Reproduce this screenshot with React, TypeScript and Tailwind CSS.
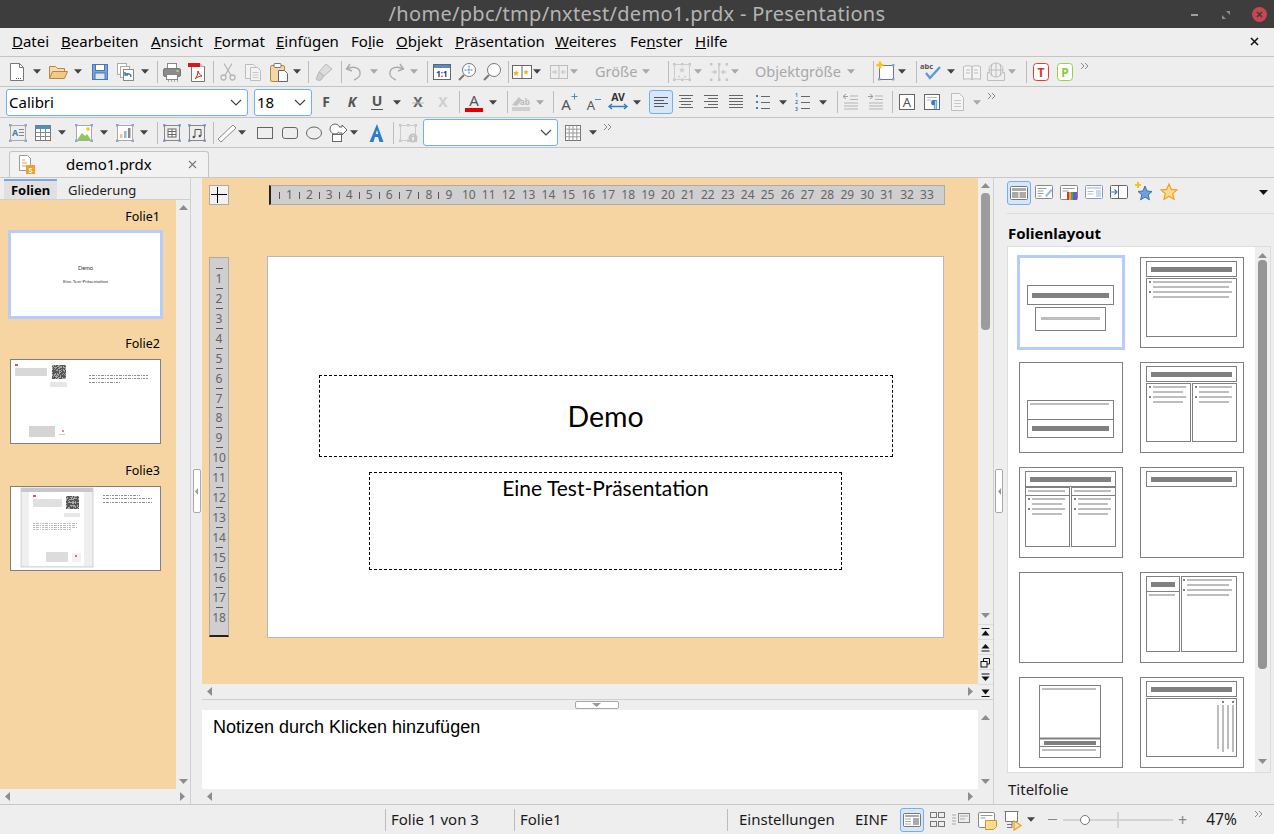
import React from "react";

type P = { c?: string; children?: React.ReactNode };
const UI = "font-['Noto_Sans',sans-serif]";

const Ic = ({ c = "", children }: P) => (
  <span className={"flex h-[22px] w-[22px] shrink-0 items-center justify-center " + c}>
    <svg width="22" height="22" viewBox="0 0 22 22" fill="none">{children}</svg>
  </span>
);
const Caret = ({ c = "", off = false }: { c?: string; off?: boolean }) => (
  <span className={"flex h-[22px] w-[8px] shrink-0 items-center justify-center " + c}>
    <svg width="9" height="5" viewBox="0 0 9 5"><path d="M0 0h9L4.5 5z" fill={off ? "#a8a8a8" : "#444"} /></svg>
  </span>
);
const Sep = ({ c = "" }: { c?: string }) => <span className={"h-[22px] w-px shrink-0 bg-[#bcbcbc] " + c} />;
const More = ({ c = "" }: { c?: string }) => (
  <span className={"mb-[10px] flex h-[10px] w-[9px] shrink-0 " + c}>
    <svg width="9" height="9" viewBox="0 0 9 9" fill="none" stroke="#8a8a8a"><path d="M1 1l3 3-3 3M5 1l3 3-3 3" /></svg>
  </span>
);
const Combo = ({ c = "", text = "" }: { c?: string; text?: string }) => (
  <div className={"flex shrink-0 items-center justify-between rounded-[3px] border border-[#6fb0f2] bg-white pl-[2px] pr-[5px] text-[15px] text-black " + c}>
    <span>{text}</span>
    <svg width="12" height="7" viewBox="0 0 12 7" fill="none" stroke="#444" strokeWidth="1.2"><path d="M1 1l5 5 5-5" /></svg>
  </div>
);

const Handles = () => (
  <g fill="#7ea6e8">
    <rect x="2" y="2" width="2.5" height="2.5" /><rect x="17.5" y="2" width="2.5" height="2.5" />
    <rect x="2" y="17.5" width="2.5" height="2.5" /><rect x="17.5" y="17.5" width="2.5" height="2.5" />
  </g>
);
const GHandles = () => (
  <g fill="#c6c6c6">
    <rect x="2" y="2" width="2.5" height="2.5" /><rect x="17.5" y="2" width="2.5" height="2.5" />
    <rect x="2" y="17.5" width="2.5" height="2.5" /><rect x="17.5" y="17.5" width="2.5" height="2.5" />
    <rect x="10" y="2" width="2.5" height="2.5" /><rect x="10" y="17.5" width="2.5" height="2.5" />
  </g>
);
const Lines = ({ xs, stroke = "#666" }: { xs: [number, number][]; stroke?: string }) => (
  <g stroke={stroke}>
    {xs.map(([a, b], i) => (
      <path key={i} d={`M${a} ${4.5 + i * 3}H${b}`} />
    ))}
  </g>
);

const Bullet = ({ x, y }: { x: number; y: number }) => <rect x={x} y={y} width="2" height="2" fill="#808080" />;
const Bar = ({ x, y, w, h = 2, dark = false }: { x: number; y: number; w: number; h?: number; dark?: boolean }) => (
  <rect x={x} y={y} width={w} height={h} fill={dark ? "#808080" : "#bdbdbd"} />
);
const Box = ({ x, y, w, h }: { x: number; y: number; w: number; h: number }) => (
  <rect x={x + 0.5} y={y + 0.5} width={w} height={h} fill="none" stroke="#808080" />
);
const TitleBox = () => (
  <>
    <Box x={6} y={4} w={90} h={15} />
    <Bar x={11} y={10} w={81} h={5} dark />
  </>
);
const Bullets = ({ x, y, w }: { x: number; y: number; w: number }) => (
  <>
    <Bullet x={x} y={y} />
    <Bar x={x + 4} y={y} w={w} />
    <Bar x={x + 4} y={y + 5} w={w - 3} />
    <Bullet x={x} y={y + 10} />
    <Bar x={x + 4} y={y + 10} w={w} />
    <Bar x={x + 4} y={y + 15} w={w - 3} />
  </>
);
const layouts: React.ReactNode[] = [
  <>
    <Box x={8} y={28} w={86} h={19} /><Bar x={13} y={36} w={77} h={5} dark />
    <Box x={16} y={50} w={70} h={23} /><Bar x={22} y={60} w={59} h={3} />
  </>,
  <><TitleBox /><Box x={6} y={21} w={90} h={58} /><Bullets x={9} y={24} w={79} /></>,
  <>
    <Box x={8} y={38} w={86} h={37} /><path d="M8 57.5h86" stroke="#808080" />
    <Bar x={11} y={41} w={79} /><Bar x={13} y={64} w={77} h={5} dark />
  </>,
  <>
    <TitleBox /><Box x={6} y={21} w={44} h={58} /><Box x={52} y={21} w={44} h={58} />
    <Bullets x={9} y={24} w={33} /><Bullets x={55} y={24} w={33} />
  </>,
  <>
    <TitleBox /><Box x={6} y={20} w={44} h={59} /><Box x={52} y={20} w={44} h={59} />
    <path d="M6 28.5h44M52 28.5h44" stroke="#808080" />
    <Bar x={9} y={23} w={37} /><Bar x={55} y={23} w={37} />
    <Bullets x={9} y={31} w={33} /><Bullets x={55} y={31} w={33} />
  </>,
  <TitleBox />,
  <></>,
  <>
    <Box x={6} y={4} w={33} h={75} /><path d="M6 19.5h33" stroke="#808080" />
    <Bar x={11} y={10} w={24} h={5} dark /><Bar x={9} y={22} w={26} />
    <Box x={41} y={4} w={55} h={75} /><Bullets x={43} y={7} w={45} />
  </>,
  <>
    <Box x={20} y={8} w={61} h={72} /><path d="M20 61.5h61" stroke="#808080" strokeWidth="2" /><path d="M20 69.5h61" stroke="#808080" />
    <Bar x={23} y={11} w={54} /><Bar x={25} y={64} w={52} h={4} dark /><Bar x={23} y={72} w={54} />
  </>,
  <>
    <TitleBox /><Box x={6} y={21} w={90} h={58} />
    <Bar x={77} y={28} w={2} h={44} /><Bar x={82} y={28} w={2} h={47} /><Bar x={87} y={28} w={2} h={44} /><Bar x={92} y={28} w={2} h={47} />
    <Bullet x={82} y={24} /><Bullet x={92} y={24} />
  </>,
];

const Layout = ({ i }: { i: number }) => (
  <svg width="104" height="91" viewBox="0 0 104 91" className="block">
    <rect x="0.5" y="0.5" width="103" height="90" fill="#fff" stroke="#808080" />
    {layouts[i]}
  </svg>
);

const Qr = ({ x, y, s }: { x: number; y: number; s: number }) => {
  const r: React.ReactNode[] = [];
  let seed = 23;
  for (let a = 0; a < s; a++)
    for (let b = 0; b < s; b++) {
      seed = (seed * 137 + 71) % 2039;
      if (seed % 5 < 3) r.push(<rect key={a + "-" + b} x={x + a} y={y + b} width="1" height="1" fill="#555" />);
    }
  return <g><rect x={x} y={y} width={s} height={s} fill="#a8a8a8" />{r}</g>;
};
const Noise = ({ x, y, w, c = "#8f8f8f" }: { x: number; y: number; w: number; c?: string }) => (
  <path d={`M${x} ${y + 0.5}h${w}`} stroke={c} strokeDasharray="2 1 3 1 1 1" />
);

const Thumb2 = () => (
  <svg width="151" height="85" viewBox="0 0 151 85" className="block">
    <rect x="0.5" y="0.5" width="150" height="84" fill="#fff" stroke="#808080" />
    <rect x="5" y="5" width="3" height="2" fill="#e25555" />
    <rect x="5" y="9" width="32" height="8" fill="#d8d8d8" />
    <Qr x={42} y={6} s={14} />
    <rect x="40" y="23" width="17" height="5" fill="#e6e6e6" />
    <rect x="19" y="67" width="26" height="11" fill="#d4d4d4" />
    <rect x="52" y="71" width="2" height="2" fill="#e88" />
    <rect x="49" y="75" width="6" height="1" fill="#ccc" />
    <Noise x={79} y={16} w={59} /><Noise x={79} y={19} w={59} /><Noise x={79} y={23} w={31} />
  </svg>
);
const Thumb3 = () => (
  <svg width="151" height="85" viewBox="0 0 151 85" className="block">
    <rect x="0.5" y="0.5" width="150" height="84" fill="#fff" stroke="#808080" />
    <rect x="11" y="2" width="72" height="79" fill="#efefef" stroke="#aaa" strokeWidth="0.5" />
    <rect x="11" y="2" width="72" height="4" fill="#c8c8c8" />
    <rect x="19" y="6" width="55" height="74" fill="#fff" />
    <rect x="23" y="9" width="3" height="2" fill="#e25555" />
    <rect x="23" y="13" width="29" height="8" fill="#e0e0e0" />
    <Qr x={56} y={10} s={13} />
    <rect x="54" y="27" width="16" height="4" fill="#e8e8e8" />
    <Noise x={23} y={37} w={44} c="#bbb" /><Noise x={23} y={39} w={42} c="#bbb" /><Noise x={23} y={41} w={44} c="#bbb" /><Noise x={23} y={43} w={38} c="#bbb" />
    <rect x="36" y="66" width="22" height="10" fill="#dcdcdc" />
    <rect x="62" y="67" width="9" height="9" fill="#f2f2f2" />
    <rect x="65" y="69" width="2" height="2" fill="#e66" />
    <Noise x={93} y={9} w={37} /><Noise x={93} y={12} w={49} /><Noise x={93} y={16} w={49} />
  </svg>
);

const Tri = ({ d = "d" }: { d?: "u" | "d" | "l" | "r" }) => {
  const w = d === "u" || d === "d";
  const p = { u: "M0 5h9L4.5 0z", d: "M0 0h9L4.5 5z", l: "M5 0v9L0 4.5z", r: "M0 0v9L5 4.5z" }[d];
  return (
    <svg width={w ? 9 : 5} height={w ? 5 : 9} viewBox={w ? "0 0 9 5" : "0 0 5 9"} className="block">
      <path d={p} fill="#8d8d8d" />
    </svg>
  );
};

const NavBtn = ({ children, c = "" }: P) => (
  <div className={"flex h-[15px] w-[15px] items-center justify-center border-t border-[#dcdcdc] " + c}>
    <svg width="11" height="11" viewBox="0 0 11 11" fill="none">{children}</svg>
  </div>
);
const Handle = () => (
  <div className="flex h-[44px] w-[8px] items-center justify-center rounded-[2px] border border-[#a8a8a8] bg-white">
    <svg width="3" height="7" viewBox="0 0 3 7"><path d="M3 0v7L0 3.5z" fill="#999" /></svg>
  </div>
);

export default function App() {
  return (
    <div className={"flex h-[834px] w-[1274px] flex-col overflow-hidden bg-[#eeeeee] text-[14px] text-[#1a1a1a] " + UI}>
      {/* title bar */}
      <div className="relative flex h-[28px] shrink-0 items-center justify-center bg-[#3d3d3d] text-[20px] tracking-[0.3px] text-[#b4b4b4]">
        /home/pbc/tmp/nxtest/demo1.prdx - Presentations
        <div className="absolute right-[7px] top-[7px] flex items-center">
          <span className="mr-[24px] h-[2px] w-[7px] bg-[#a0a0a0]" />
          <svg width="8" height="8" viewBox="0 0 8 8" className="mr-[22px]"><path d="M4 0h4v4zM0 4l4 4H0z" fill="#8d8d8d" /></svg>
          <span className="flex h-[15px] w-[15px] items-center justify-center rounded-full bg-[#c9464f]">
            <svg width="7" height="7" viewBox="0 0 7 7" stroke="#3d3d3d" strokeWidth="1.6"><path d="M1 1l5 5M6 1L1 6" /></svg>
          </span>
        </div>
      </div>
      {/* menu */}
      <div className="flex h-[29px] shrink-0 items-center border-b border-[#c4c4c4] pb-[2px] pl-[12px] text-[15px] text-black">
        <span className="w-[49px]"><u>D</u>atei</span>
        <span className="w-[90px]"><u>B</u>earbeiten</span>
        <span className="w-[63px]"><u>A</u>nsicht</span>
        <span className="w-[62px]"><u>F</u>ormat</span>
        <span className="w-[75px]"><u>E</u>infügen</span>
        <span className="w-[45px]">Fo<u>l</u>ie</span>
        <span className="w-[59px]"><u>O</u>bjekt</span>
        <span className="w-[100px]"><u>P</u>räsentation</span>
        <span className="w-[75px]"><u>W</u>eiteres</span>
        <span className="w-[65px]">Fe<u>n</u>ster</span>
        <span><u>H</u>ilfe</span>
        <svg width="9" height="9" viewBox="0 0 9 9" stroke="#111" strokeWidth="1.5" className="ml-auto mr-[15px]"><path d="M1 1l7 7M8 1L1 8" /></svg>
      </div>
      {/* toolbar 1 */}
      <div className="flex h-[30px] shrink-0 items-center border-b border-[#c4c4c4]">
        <Ic c="ml-[6px]"><path d="M4.5 2.5h9l4 4v13h-13z" fill="#fff" stroke="#777" /><path d="M13.5 2.5v4h4" stroke="#777" /><path d="M10 17.5h1M12 17.5h1M14 17.5h1" stroke="#555" /></Ic>
        <Caret c="ml-[5px]" />
        <Ic c="ml-[6px]"><path d="M2.5 17.5v-12h6l2 2h7v3" fill="#f4dcb0" stroke="#b9853f" /><path d="M2.5 17.5l3-7h15l-3 7z" fill="#f2c985" stroke="#b9853f" /></Ic>
        <Caret c="ml-[5px]" />
        <Ic c="ml-[7px]"><rect x="3.5" y="3.5" width="15" height="15" fill="#7aa5dc" stroke="#4a78b0" /><rect x="6.5" y="3.5" width="9" height="6" fill="#fff" stroke="#4a78b0" /><rect x="6" y="12" width="10" height="6.5" fill="#dfe9f7" stroke="#4a78b0" /></Ic>
        <Ic c="ml-[4px]"><rect x="2.5" y="2.5" width="9" height="11" fill="#fff" stroke="#aaa" /><rect x="5.5" y="5.5" width="9" height="11" fill="#fff" stroke="#aaa" /><rect x="8.5" y="8.5" width="10" height="11" fill="#fff" stroke="#888" /><path d="M16 16c0-3-3-4-6-2.5M10 11v3h3" stroke="#3f7fb5" strokeWidth="1.5" /></Ic>
        <Caret c="ml-[4px]" />
        <Sep c="ml-[8px]" />
        <Ic c="ml-[3px]"><rect x="6.5" y="2.5" width="9" height="5" fill="#fff" stroke="#888" /><rect x="2.5" y="7.5" width="17" height="8" rx="1.5" fill="#8b8b8b" stroke="#777" /><rect x="5.5" y="13.5" width="11" height="5" fill="#fff" stroke="#888" /><path d="M7 20h1M10 20h1M13 20h1M16 20h1" stroke="#666" /><rect x="15.5" y="9" width="2" height="2" fill="#b7d85c" /></Ic>
        <Ic c="ml-[3px]"><path d="M5.5 5.5h13v15h-13z" fill="#fff" stroke="#777" /><rect x="2" y="2" width="12" height="4" fill="#d11a1a" /><path d="M14 2l4 4h-4z" fill="#bbb" /><path d="M9 18c2-2 3-5 3-8 1 3 2 4 4 5-2 0-5 1-7 3z" fill="none" stroke="#d11a1a" /></Ic>
        <Sep c="ml-[5px]" />
        <Ic c="ml-[3px]"><g stroke="#b5b5b5" strokeWidth="1.3"><circle cx="6.5" cy="16.5" r="2.5" /><circle cx="15.5" cy="16.5" r="2.5" /><path d="M8 14.5L15 2.5M14 14.5L7 2.5" /></g></Ic>
        <Ic c="ml-[3px]"><g stroke="#bdbdbd" fill="#f3f3f3"><path d="M3.5 3.5h8l2 2v12h-10z" /><path d="M8.5 6.5h7l3 3v10h-10z" /></g><path d="M10.5 11.5h6M10.5 14h6M10.5 16.5h6" stroke="#c8c8c8" /></Ic>
        <Ic c="ml-[4px]"><rect x="2.5" y="4.5" width="14" height="16" rx="1.5" fill="#f2d7a8" stroke="#b9853f" /><rect x="6" y="2.5" width="7" height="4" rx="1" fill="#fff" stroke="#777" /><path d="M10.5 9.5h6l3 3v8h-9z" fill="#fff" stroke="#666" /></Ic>
        <Caret c="ml-[3px]" />
        <Sep c="ml-[7px]" />
        <Ic c="ml-[4px]"><path d="M13 3l6 5-8 7-5-4z" fill="#ddd" stroke="#b8b8b8" /><path d="M6 11l5 4-3 4c-2 1-4 0-5-1z" fill="#cfcfcf" stroke="#b8b8b8" /></Ic>
        <Sep c="ml-[6px]" />
        <Ic c="ml-px"><path d="M7 3L3.5 8 9 10M4 8c5-3 12-2 13 3 1 4-3 7-6 8" stroke="#ababab" strokeWidth="1.4" /></Ic>
        <Caret c="ml-[5px]" off />
        <Ic c="ml-[7px]"><path d="M15 3l3.5 5-5.5 2M18 8c-5-3-12-2-13 3-1 4 3 7 6 8" stroke="#ababab" strokeWidth="1.4" /></Ic>
        <Caret c="ml-[3px]" off />
        <Sep c="ml-[9px]" />
        <Ic c="ml-[3px]"><rect x="2.5" y="3.5" width="17" height="15" fill="#fff" stroke="#666" /><rect x="3" y="4" width="16" height="3" fill="#4f8fc4" /><text x="11" y="16" textAnchor="middle" fontSize="8" fontWeight="700" fill="#336" fontFamily="Noto Sans">1:1</text></Ic>
        <Ic c="ml-[3px]"><circle cx="13" cy="9" r="6.5" fill="#fff" stroke="#777" /><path d="M8 14l-5 5" stroke="#777" strokeWidth="2" /><path d="M13 4.5v9M8.5 9h9" stroke="#3f7fb5" strokeDasharray="2 1" /></Ic>
        <Ic c="ml-[3px]"><circle cx="13" cy="9" r="6.5" fill="#fff" stroke="#777" /><path d="M8 14l-5 5" stroke="#777" strokeWidth="2" /></Ic>
        <Sep c="ml-[5px]" />
        <Ic c="ml-[2px]"><rect x="1.5" y="4.5" width="19" height="13" fill="#fff" stroke="#666" /><path d="M11 4.5v13" stroke="#666" /><path d="M5 9l1 2h2l-1.500 1.500L7 15l-2-1.200L3 15l.5-2.500L2.500 11h2z" fill="#f0b323" /><path d="M15 8l.7 2 2 .5-1.500 1.200.5 2-1.700-1.200-1.700 1.200.5-2-1.300-1.200 2-.5z" fill="#f0b323" /></Ic>
        <Caret />
        <Ic c="ml-[7px]"><g stroke="#bdbdbd"><rect x="2.500" y="4.500" width="17" height="13" /><path d="M11 4.500v13M4 11h4M6.500 9l2 2-2 2M18 11h-4M15.500 9l-2 2 2 2" /></g></Ic>
        <Caret off />
        <span className="ml-[17px] w-[42px] shrink-0 text-[14.500px] text-[#a8a8a8]">Größe</span>
        <Caret c="ml-[5px]" off />
        <Sep c="ml-[18px]" />
        <Ic c="ml-[2px]"><GHandles /><rect x="3.500" y="3.500" width="15" height="15" stroke="#ccc" /><path d="M11 6l1 2h2l-1.500 1.500.5 2-2-1-2 1 .5-2L8 8h2zM8 14l.5 1 1 .3-.8.7.2 1-.9-.5-.9.5.2-1-.8-.7 1-.3zM14 14l.5 1 1 .3-.8.7.2 1-.9-.5-.9.5.2-1-.8-.7 1-.3z" fill="#d0d0d0" /></Ic>
        <Caret c="ml-px" off />
        <Ic c="ml-[6px]"><GHandles /><path d="M11 4v14M3.500 11h5M6 9l2.500 2L6 13M18.500 11h-5M16 9l-2.500 2 2.500 2" stroke="#bdbdbd" /></Ic>
        <Caret c="ml-px" off />
        <span className="ml-[16px] w-[88px] shrink-0 text-[14.500px] text-[#a8a8a8]">Objektgröße</span>
        <Caret c="ml-[4px]" off />
        <Sep c="ml-[18px]" />
        <Ic c="ml-[2px]"><rect x="3.500" y="4.500" width="14" height="14" fill="#fff" stroke="#777" /><rect x="16" y="3" width="2.500" height="2.500" fill="#7ea6e8" /><rect x="2" y="17" width="2.500" height="2.500" fill="#7ea6e8" /><rect x="16" y="17" width="2.500" height="2.500" fill="#7ea6e8" /><path d="M4 0.500v7M0.500 4h7" stroke="#f5c518" strokeWidth="2.400" /></Ic>
        <Caret />
        <Sep c="ml-[10px]" />
        <Ic c="ml-[3px]"><text x="0" y="8" fontSize="7.500" fontWeight="700" fill="#555" fontFamily="Noto Sans">abc</text><path d="M6 12l4 5 10-11" stroke="#5b9bd5" strokeWidth="2.400" /></Ic>
        <Caret c="ml-[5px]" />
        <Ic c="ml-[6px]"><g stroke="#bdbdbd" fill="#f4f4f4"><path d="M2.500 5.500c3-1 6-1 8.500 0v13c-2.500-1-5.500-1-8.500 0zM19.500 5.500c-3-1-6-1-8.500 0v13c2.500-1 5.500-1 8.500 0z" /><path d="M5 9h4M5 12h4M13 9h4M13 12h4" /></g></Ic>
        <Ic c="ml-[2px]"><g stroke="#bdbdbd" fill="#efefef"><path d="M2.500 11.500h17v8h-17z" /><circle cx="11" cy="9" r="7" /><path d="M4 9h14M11 2v14M7 3c-1 4-1 8 0 12M15 3c1 4 1 8 0 12" fill="none" /></g></Ic>
        <Caret c="ml-px" off />
        <Sep c="ml-[10px]" />
        <Ic c="ml-[3px]"><rect x="3.500" y="2.500" width="15" height="17" rx="3" fill="#fff" stroke="#e23b3b" /><text x="11" y="15.500" textAnchor="middle" fontSize="12" fontWeight="700" fill="#e12b2b" fontFamily="Noto Sans">T</text></Ic>
        <Ic c="ml-[2px]"><rect x="3.500" y="2.500" width="15" height="17" rx="3" fill="#fff" stroke="#9bd13f" /><text x="11" y="15.500" textAnchor="middle" fontSize="12" fontWeight="700" fill="#8cc63f" fontFamily="Noto Sans">P</text></Ic>
        <More c="ml-[4px]" />
      </div>
      {/* toolbar 2 */}
      <div className="flex h-[31px] shrink-0 items-center border-b border-[#c4c4c4]">
        <Combo c="ml-[6px] h-[27px] w-[242px]" text="Calibri" />
        <Combo c="ml-[6px] h-[27px] w-[58px]" text="18" />
        <Ic c="ml-[3px]"><text x="11" y="16" textAnchor="middle" fontSize="14" fontWeight="700" fill="#555" fontFamily="Noto Sans">F</text></Ic>
        <Ic c="ml-[4px]"><text x="11" y="16" textAnchor="middle" fontSize="14" fontWeight="700" fontStyle="italic" fill="#555" fontFamily="Noto Sans">K</text></Ic>
        <Ic c="ml-[3px]"><text x="11" y="15" textAnchor="middle" fontSize="14" fontWeight="700" fill="#555" fontFamily="Noto Sans">U</text><path d="M5 18.500h12" stroke="#555" /></Ic>
        <Caret c="ml-[5px]" />
        <Ic c="ml-[6px]"><text x="11" y="16" textAnchor="middle" fontSize="14" fontWeight="700" fill="#666" fontFamily="Noto Sans">X</text><path d="M5 12h12" stroke="#bbb" /></Ic>
        <Ic c="ml-[3px]"><text x="11" y="16" textAnchor="middle" fontSize="14" fontWeight="700" fill="#cfcfcf" fontFamily="Noto Sans">X</text></Ic>
        <Sep c="ml-[5px]" />
        <Ic c="ml-[3px]"><text x="11" y="15" textAnchor="middle" fontSize="15" fill="#555" fontFamily="Noto Sans">A</text><rect x="2" y="17" width="18" height="4" fill="#e00000" /></Ic>
        <Caret c="ml-[4px]" />
        <Sep c="ml-[10px]" />
        <Ic c="ml-[2px]"><path d="M2 14l7-8 3 3-5 6z" fill="#c4c4c4" /><text x="10" y="14" fontSize="8" fontWeight="700" fill="#bcbcbc" fontFamily="Noto Sans">ab</text><rect x="2" y="16" width="18" height="4" fill="#cfcfcf" /></Ic>
        <Caret c="ml-[4px]" off />
        <Sep c="ml-[9px]" />
        <Ic c="ml-[3px]"><text x="9" y="19" textAnchor="middle" fontSize="15" fill="#555" fontFamily="Noto Sans">A</text><path d="M14.500 5.500h6M17.500 2.500v6" stroke="#3f8fc9" /></Ic>
        <Ic c="ml-[3px]"><text x="9" y="19" textAnchor="middle" fontSize="13" fill="#555" fontFamily="Noto Sans">A</text><path d="M13 8.500h6" stroke="#3f8fc9" /></Ic>
        <Ic c="ml-[3px]"><text x="11" y="10" textAnchor="middle" fontSize="10.500" fontWeight="700" fill="#333" fontFamily="Noto Sans">AV</text><path d="M2 15.500h18M5 13l-3 2.500L5 18M17 13l3 2.500-3 2.500" stroke="#2f7fc4" strokeWidth="1.400" /></Ic>
        <Caret c="ml-[4px]" />
        <span className="ml-[8px] flex h-[24px] w-[24px] shrink-0 items-center justify-center rounded-[3px] border border-[#6fb0f2] bg-[#d9e6f8]">
          <svg width="16" height="13" viewBox="0 0 16 13" stroke="#555"><path d="M1 1.500h14M1 4.500h10M1 7.500h14M1 10.500h10" /></svg>
        </span>
        <Ic c="ml-[2px]"><Lines xs={[[4, 18], [6, 16], [4, 18], [6, 16], [4, 18]]} /></Ic>
        <Ic c="ml-[3px]"><Lines xs={[[4, 18], [8, 18], [4, 18], [8, 18], [4, 18]]} /></Ic>
        <Ic c="ml-[3px]"><Lines xs={[[4, 18], [4, 18], [4, 18], [4, 18], [4, 18]]} /></Ic>
        <Ic c="ml-[5px]"><rect x="4" y="4" width="2" height="2" fill="#3f7fb5" /><rect x="4" y="10" width="2" height="2" fill="#3f7fb5" /><rect x="4" y="16" width="2" height="2" fill="#3f7fb5" /><path d="M9 5.500h9M9 11.500h9M9 17.500h9" stroke="#666" /></Ic>
        <Caret c="ml-[5px]" />
        <Ic c="ml-[5px]"><g fontSize="5" fontWeight="700" fill="#3f7fb5" fontFamily="Noto Sans"><text x="3" y="6">1</text><text x="3" y="13">2</text><text x="3" y="20">3</text></g><path d="M9 5.500h9M9 11.500h9M9 17.500h9" stroke="#666" /></Ic>
        <Caret c="ml-[5px]" />
        <Sep c="ml-[10px]" />
        <Ic c="ml-[2px]"><path d="M10 5h8M10 8.500h8M4 12h14M4 15h14M4 18h14" stroke="#b5b5b5" /><path d="M3 5.500h5M6 3L3 5.500 6 8" stroke="#9d9d9d" /></Ic>
        <Ic c="ml-[3px]"><path d="M10 5h8M10 8.500h8M4 12h14M4 15h14M4 18h14" stroke="#b5b5b5" /><path d="M3 5.500h5M5 3l3 2.500L5 8" stroke="#9d9d9d" /></Ic>
        <Sep c="ml-[5px]" />
        <Ic c="ml-[3px]"><rect x="3.500" y="3.500" width="15" height="15" fill="#fff" stroke="#666" /><text x="11" y="16" textAnchor="middle" fontSize="13" fill="#555" fontFamily="Noto Sans">A</text></Ic>
        <Ic c="ml-[3px]"><rect x="3.500" y="3.500" width="15" height="15" fill="#fff" stroke="#666" /><path d="M6 6.500h10M6 9h4" stroke="#bbb" /><text x="13" y="17" textAnchor="middle" fontSize="11" fontWeight="700" fill="#2f7fc4" fontFamily="Noto Sans">¶</text></Ic>
        <Ic c="ml-[3px]"><path d="M5.500 2.500h8l4 4v13h-12z" fill="#f4f4f4" stroke="#bdbdbd" /><path d="M8 9.500h7M8 12.500h7M8 15.500h7" stroke="#c8c8c8" /></Ic>
        <Caret c="ml-[5px]" off />
        <More c="ml-[6px]" />
      </div>
      {/* toolbar 3 */}
      <div className="flex h-[30px] shrink-0 items-center border-b border-[#c4c4c4]">
        <Ic c="ml-[7px]"><Handles /><rect x="3.500" y="3.500" width="15" height="15" stroke="#aaa" /><text x="8" y="14" textAnchor="middle" fontSize="9" fontWeight="700" fill="#3f7fb5" fontFamily="Noto Sans">A</text><path d="M12 7.500h5M12 10.500h5M12 13.500h5" stroke="#888" /></Ic>
        <Ic c="ml-[3px]"><rect x="3.500" y="3.500" width="15" height="15" fill="#fff" stroke="#777" /><rect x="3.500" y="3.500" width="15" height="3.500" fill="#4f8fc4" /><path d="M3.500 10.500h15M3.500 14.500h15M8.500 7v11M13.500 7v11" stroke="#888" /></Ic>
        <Caret c="ml-[4px]" />
        <Ic c="ml-[7px]"><Handles /><rect x="3.500" y="3.500" width="15" height="15" fill="#fff" stroke="#aaa" /><path d="M4 18l5-7 3 3 2-2 4 6z" fill="#8fc85a" /><circle cx="15" cy="7" r="1.800" fill="#f5c518" /></Ic>
        <Caret c="ml-[5px]" />
        <Ic c="ml-[6px]"><Handles /><rect x="3.500" y="3.500" width="15" height="15" fill="#fff" stroke="#aaa" /><rect x="6" y="12" width="2.500" height="4" fill="#f0c878" /><rect x="10" y="9" width="2.500" height="7" fill="#8fb6dc" /><rect x="14" y="6" width="2.500" height="10" fill="#888" /></Ic>
        <Caret c="ml-[4px]" />
        <Sep c="ml-[9px]" />
        <Ic c="ml-[3px]"><Handles /><rect x="3.500" y="3.500" width="15" height="15" stroke="#888" /><rect x="7" y="7" width="8" height="8" fill="#fff" stroke="#666" /><path d="M11 7v8M7 9.500h8M7 12.500h8" stroke="#666" /></Ic>
        <Ic c="ml-[3px]"><Handles /><rect x="3.500" y="3.500" width="15" height="15" stroke="#888" /><path d="M9 15V7.500h6V14" stroke="#555" /><circle cx="7.800" cy="15" r="1.300" fill="#555" /><circle cx="13.800" cy="14" r="1.300" fill="#555" /></Ic>
        <Sep c="ml-[5px]" />
        <Ic c="ml-[2px]"><path d="M2 17l15-14 3 3L5 20z" fill="#fff" stroke="#888" /></Ic>
        <Caret />
        <Ic c="ml-[8px]"><rect x="3.500" y="5.500" width="15" height="11" stroke="#666" /></Ic>
        <Ic c="ml-[3px]"><rect x="3.500" y="5.500" width="15" height="11" rx="2.500" stroke="#666" /></Ic>
        <Ic c="ml-[2px]"><ellipse cx="11" cy="11" rx="7.500" ry="6" stroke="#666" /></Ic>
        <Ic c="ml-[2px]"><circle cx="8" cy="7" r="5" fill="#fff" stroke="#666" /><rect x="5.500" y="12.500" width="9" height="7" fill="#fff" stroke="#666" /><path d="M12 5h3V3l5 5-5 5v-2h-3" fill="#fff" stroke="#666" /></Ic>
        <Caret c="ml-px" />
        <Ic c="ml-[8px]"><path d="M11 2l6.500 18h-4L12 15h-3l-1.500 5h-4z" fill="#2f7fc4" /><path d="M9.800 12h2.400L11 8z" fill="#eee" /></Ic>
        <Sep c="ml-[5px]" />
        <Ic c="ml-[3px]"><GHandles /><rect x="3.500" y="3.500" width="15" height="15" stroke="#ccc" /><circle cx="16" cy="16" r="4.500" fill="#c4c4c4" /><path d="M16 15v3.500M16 13.500v.5" stroke="#fff" strokeWidth="1.400" /></Ic>
        <Combo c="ml-[4px] h-[27px] w-[135px]" />
        <Ic c="ml-[4px]"><rect x="3.500" y="3.500" width="15" height="15" fill="#fff" stroke="#777" /><path d="M7.200 3.500v15M11 3.500v15M14.800 3.500v15M3.500 7.200h15M3.500 11h15M3.500 14.800h15" stroke="#999" /></Ic>
        <Caret c="ml-[5px]" />
        <More c="ml-[6px]" />
      </div>
      {/* tab bar */}
      <div className="flex h-[30px] shrink-0 items-end border-b border-[#c8c8c8] pl-[9px]">
        <div className="flex h-[26px] w-[200px] items-center rounded-t-[3px] border border-b-0 border-[#c4c4c4] bg-[#f2f2f2] pl-[6px] text-[15px] text-black">
          <svg width="22" height="22" viewBox="0 0 22 22" fill="none" className="shrink-0"><path d="M3.500 1.500h8l3 3v12h-11z" fill="#fff" stroke="#999" /><path d="M6 6h3M6 9h5M6 12h5" stroke="#e8a33d" /><rect x="10" y="11" width="9" height="9" fill="#f0a030" /><text x="14.500" y="18.500" textAnchor="middle" fontSize="7.500" fontWeight="700" fill="#fff" fontFamily="Noto Sans">S</text></svg>
          <span className="ml-[28px]">demo1.prdx</span>
          <svg width="9" height="9" viewBox="0 0 9 9" stroke="#777" strokeWidth="1.100" className="ml-auto mr-[11px]"><path d="M1 1l7 7M8 1L1 8" /></svg>
        </div>
      </div>
      {/* main */}
      <div className="flex min-h-0 flex-1">
        {/* slide pane */}
        <div className="flex w-[191px] shrink-0 flex-col border-r border-[#cfcfcf]">
          <div className="flex h-[22px] shrink-0 items-end border-b border-[#cfcfcf] pl-[4px] text-[13px]">
            <div className="flex h-[20px] w-[53px] items-center justify-center border-t-2 border-[#7ba7e8] bg-[#e0e0e0] pt-[2px] font-bold text-black">Folien</div>
            <div className="mb-[-1px] ml-[11px] text-[#222]">Gliederung</div>
          </div>
          <div className="flex min-h-0 flex-1">
            <div className="flex w-[176px] flex-col bg-[#f6d5a3] pr-[16px] text-[12.500px] text-black">
              <div className="mt-[8px] text-right leading-[18px]">Folie1</div>
              <div className="ml-[8px] mt-[4px] flex h-[89px] w-[155px] flex-col items-center border-[3px] border-[#b5cdfb] bg-white font-['Lato',sans-serif]">
                <div className="mt-[30px] text-[5.600px] leading-[9px] text-[#333]">Demo</div>
                <div className="mt-[6px] text-[4.600px] leading-[7px] text-[#333]">Eine Test-Präsentation</div>
              </div>
              <div className="mt-[16px] text-right leading-[18px]">Folie2</div>
              <div className="ml-[10px] mt-[6px] w-[151px]"><Thumb2 /></div>
              <div className="mt-[18px] text-right leading-[18px]">Folie3</div>
              <div className="ml-[10px] mt-[6px] w-[151px]"><Thumb3 /></div>
            </div>
            <div className="flex w-[14px] flex-col items-center justify-between py-[5px]"><Tri d="u" /><Tri d="d" /></div>
          </div>
          <div className="flex h-[15px] shrink-0 items-center justify-between px-[5px]"><Tri d="l" /><Tri d="r" /></div>
        </div>
        {/* left gutter */}
        <div className="flex w-[11px] shrink-0 items-center justify-center"><Handle /></div>
        {/* centre */}
        <div className="flex w-[791px] shrink-0 flex-col">
          <div className="flex h-[521px] shrink-0">
            <div className="flex w-[776px] flex-col">
              <div className="h-[506px] bg-[#f6d5a3] pl-[7px] pt-[7px]">
                <div className="flex">
                  <div className="relative h-[20px] w-[20px] border border-[#aaa] bg-[#f2f2f2]">
                    <span className="absolute left-[7px] top-px h-[16px] w-px bg-black" />
                    <span className="absolute left-px top-[8px] h-px w-[16px] bg-black" />
                  </div>
                  <div className="ml-[40px] flex h-[20px] w-[676px] items-center border border-l-2 border-[#aaa] border-l-[#222] bg-[#cfcfcf] pl-[8px] text-[12px] text-[#666]">
                    {Array.from({ length: 33 }, (_, i) => (
                      <div key={i} className="flex h-full w-[19.93px] shrink-0 items-center">
                        <span className={i < 9 ? "h-[7px] w-px shrink-0 bg-[#555]" : "h-[7px] w-px shrink-0"} />
                        <span className="w-[19px] text-center">{i + 1}</span>
                      </div>
                    ))}
                  </div>
                </div>
                <div className="mt-[51px] flex items-start">
                  <div className="mt-px flex h-[380px] w-[20px] flex-col border border-b-2 border-[#aaa] border-b-[#222] bg-[#cfcfcf] pt-[10px] text-[12px] leading-none text-[#666]">
                    {Array.from({ length: 18 }, (_, i) => (
                      <div key={i} className="flex h-[19.93px] shrink-0 flex-col items-center">
                        <span className="h-px w-[7px] shrink-0 bg-[#555]" />
                        <span className="mt-[4px]">{i + 1}</span>
                      </div>
                    ))}
                  </div>
                  <div className="ml-[38px] flex h-[382px] w-[677px] flex-col items-center border border-[#b8b8b8] bg-white pt-[118px] font-['Lato',sans-serif] text-black">
                    <div className="flex h-[82px] w-[574px] items-center justify-center border border-dashed border-black text-[28.500px]">Demo</div>
                    <div className="mt-[15px] h-[98px] w-[473px] border border-dashed border-black text-center text-[21px] leading-[30px]">Eine Test-Präsentation</div>
                  </div>
                </div>
              </div>
              <div className="flex h-[15px] items-center justify-between px-[5px]"><Tri d="l" /><Tri d="r" /></div>
            </div>
            <div className="flex w-[15px] flex-col items-center">
              <div className="mt-[5px]"><Tri d="u" /></div>
              <div className="mt-[5px] h-[138px] w-[9px] rounded-[4px] bg-[#9c9c9c]" />
              <div className="mt-[283px]"><Tri d="d" /></div>
              <div className="mt-[6px] flex flex-col">
                <NavBtn><path d="M1.500 1.500h8" stroke="#111" /><path d="M1.500 8.500L5.500 3.500l4 5z" fill="#111" /></NavBtn>
                <NavBtn><path d="M1.500 6.500L5.500 2l4 4.500z" fill="#111" /><path d="M1.500 9h8" stroke="#111" /></NavBtn>
                <NavBtn><rect x="1" y="4.500" width="6" height="5.500" stroke="#111" /><path d="M3.500 4.500V1.500h6v5.500H7" stroke="#111" /></NavBtn>
                <NavBtn><path d="M1.500 2h8" stroke="#111" /><path d="M1.500 4.500L5.500 9l4-4.500z" fill="#111" /></NavBtn>
                <NavBtn><path d="M1.500 2.500l4 5 4-5z" fill="#111" /><path d="M1.500 9.500h8" stroke="#111" /></NavBtn>
              </div>
            </div>
          </div>
          <div className="flex h-[11px] shrink-0 justify-center border-t border-[#cfcfcf] pr-[2px] pt-px">
            <div className="flex h-[8px] w-[44px] items-center justify-center rounded-[2px] border border-[#a8a8a8] bg-white">
              <svg width="9" height="4" viewBox="0 0 9 4"><path d="M0 0h9L4.500 4z" fill="#999" /></svg>
            </div>
          </div>
          <div className="flex h-[79px] shrink-0">
            <div className="w-[776px] bg-white pl-[11px] pt-[5px] font-['Liberation_Sans',sans-serif] text-[18px] leading-[24px] text-black">Notizen durch Klicken hinzufügen</div>
            <div className="flex w-[15px] flex-col items-center justify-between py-[5px]"><Tri d="u" /><Tri d="d" /></div>
          </div>
          <div className="flex h-[15px] shrink-0 items-center justify-between pl-[5px] pr-[20px]"><Tri d="l" /><Tri d="r" /></div>
        </div>
        {/* sidebar */}
        <div className="flex w-[281px] shrink-0 border-l border-[#cfcfcf]">
          <div className="flex w-[13px] shrink-0 items-center pl-px"><Handle /></div>
          <div className="flex w-[267px] shrink-0 flex-col">
            <div className="flex h-[36px] shrink-0 items-start border-b border-[#dcdcdc] pt-[3px]">
              <span className="flex h-[24px] w-[24px] shrink-0 items-center justify-center rounded-[3px] border border-[#6fb0f2] bg-[#d9e6f8]">
                <svg width="18" height="14" viewBox="0 0 18 14"><rect x="0.500" y="0.500" width="17" height="13" rx="1" fill="#fff" stroke="#777" /><rect x="2" y="2" width="14" height="3" fill="#aaa" /><rect x="2" y="6" width="6.500" height="6" fill="#aaa" /><rect x="9.500" y="6" width="6.500" height="6" fill="#aaa" /></svg>
              </span>
              <Ic c="ml-[2px]"><rect x="2.500" y="4.500" width="17" height="13" rx="1" fill="#fff" stroke="#888" /><path d="M4.500 7.500h9M4.500 10h6M4.500 12.500h6M4.500 15h4" stroke="#999" /><path d="M12 15l6-7 1.500 1.500-6 6.500z" fill="#8fb6e8" /></Ic>
              <Ic c="ml-[3px]"><rect x="2.500" y="4.500" width="17" height="14" rx="1" fill="#fff" stroke="#888" /><path d="M4.500 7.500h12M4.500 10h6" stroke="#999" /><g><rect x="9" y="11" width="2" height="8" fill="#e53030" /><rect x="11" y="11" width="2" height="8" fill="#f0a030" /><rect x="13" y="11" width="2" height="8" fill="#40b040" /><rect x="15" y="11" width="2" height="8" fill="#3070e0" /><rect x="17" y="11" width="2" height="8" fill="#a040c0" /></g></Ic>
              <Ic c="ml-[3px]"><rect x="2.500" y="4.500" width="17" height="13" rx="1" fill="#fff" stroke="#8a9cb8" /><rect x="4" y="6" width="14" height="2" fill="#c9d8ee" /><rect x="13" y="9" width="5" height="7" fill="#c9d8ee" /><path d="M4.500 10.500h6M4.500 13h6" stroke="#a9bcd8" /></Ic>
              <Ic c="ml-[3px]"><rect x="2.500" y="4.500" width="17" height="13" rx="1" fill="#fff" stroke="#666" /><path d="M10.500 4.500v13" stroke="#666" /><path d="M3 11h6M6.500 8.500L9 11l-2.500 2.500" stroke="#2f7fc4" strokeWidth="1.200" /></Ic>
              <Ic c="ml-[3px]"><path d="M12 5l2 5 5 .5-3.800 3.300 1.200 5-4.400-2.700-4.400 2.700 1.200-5L5 10.500 10 10z" fill="#6f9fdc" stroke="#3f6fb0" /><path d="M5 1v6M2 4h6" stroke="#f5c518" strokeWidth="2" /></Ic>
              <Ic c="ml-[3px]"><path d="M11 3l2.300 5.400 5.700.5-4.300 3.700 1.300 5.600L11 15.300 6 18.200l1.300-5.600L3 8.900l5.700-.5z" fill="#fbdc8c" stroke="#f0a020" strokeWidth="1.200" /></Ic>
              <span className="ml-[79px] mt-[9px] flex"><svg width="9" height="5" viewBox="0 0 9 5"><path d="M0 0h9L4.500 5z" fill="#111" /></svg></span>
            </div>
            <div className="mt-[9px] h-[20px] shrink-0 pl-px text-[15px] font-bold leading-[20px] text-black">Folienlayout</div>
            <div className="mt-[3px] flex h-[527px] w-[264px] shrink-0 border border-[#dcdcdc] bg-white">
              <div className="grid w-[247px] grid-cols-[104px_104px] content-start gap-x-[17px] gap-y-[14px] pl-[11px] pt-[10px]">
                {layouts.map((_, i) =>
                  i === 0 ? (
                    <div key={i} className="relative"><Layout i={i} /><span className="absolute inset-[-2px] border-[3px] border-[#b5cdfb]" /></div>
                  ) : (
                    <Layout key={i} i={i} />
                  )
                )}
              </div>
              <div className="flex w-[15px] flex-col items-center bg-[#eeeeee]">
                <div className="mt-[6px]"><Tri d="u" /></div>
                <div className="mt-[2px] h-[409px] w-[9px] rounded-[4px] bg-[#949494]" />
                <div className="mt-[90px]"><Tri d="d" /></div>
              </div>
            </div>
            <div className="mt-[6px] pl-px text-[15px] leading-[20px] text-[#1a1a1a]">Titelfolie</div>
          </div>
        </div>
      </div>
      {/* status */}
      <div className="flex h-[30px] shrink-0 items-center border-t border-[#c8c8c8] text-[15px] text-[#1a1a1a]">
        <Sep c="ml-[385px]" />
        <span className="ml-[5px] w-[123px]">Folie 1 von 3</span>
        <Sep />
        <span className="ml-[5px] w-[207px]">Folie1</span>
        <Sep />
        <span className="ml-[11px] w-[116px]">Einstellungen</span>
        <span className="w-[45px]">EINF</span>
        <span className="flex h-[24px] w-[24px] shrink-0 items-center justify-center rounded-[3px] border border-[#6fb0f2] bg-[#d9e6f8]">
          <svg width="18" height="14" viewBox="0 0 18 14"><rect x="0.500" y="0.500" width="17" height="13" rx="1" fill="#fff" stroke="#777" /><rect x="2" y="2" width="14" height="2" fill="#aaa" /><path d="M2 6h6M2 8.500h6M2 11h6" stroke="#aaa" /><rect x="10" y="5" width="6" height="7" fill="#aaa" /></svg>
        </span>
        <Ic c="ml-[2px]"><g stroke="#777"><rect x="4.500" y="3.500" width="6" height="5" /><rect x="12.500" y="3.500" width="6" height="5" /><rect x="4.500" y="12.500" width="6" height="5" /><rect x="12.500" y="12.500" width="6" height="5" /></g></Ic>
        <Ic c="ml-[2px]"><path d="M2 6h4M2 9h4M2 12h4M2 15h4" stroke="#aaa" /><rect x="8.500" y="4.500" width="11" height="9" stroke="#888" /><path d="M10 7h8M10 10h5" stroke="#aaa" /></Ic>
        <Ic c="ml-[4px]"><rect x="2.500" y="3.500" width="16" height="15" rx="1.500" fill="#fff" stroke="#888" /><path d="M4.500 6.500h12M4.500 9h5" stroke="#999" /><path d="M9.500 11.500h11v6l-3 3h-8z" fill="#fbdc8c" stroke="#c9953a" /></Ic>
        <Ic c="ml-[3px]"><path d="M3.500 2.500h14M4.500 2.500v10h12v-10" stroke="#777" fill="#fff" /><path d="M6 18.500h5v-6M6 15.500h5" stroke="#777" /><path d="M13 12l7 4.500-7 4.500z" fill="#fde9a8" stroke="#f0a020" strokeWidth="1.300" /></Ic>
        <Caret c="ml-[4px]" />
        <span className="ml-[13px] h-px w-[9px] shrink-0 bg-[#888]" />
        <div className="relative ml-[6px] h-[16px] w-[110px] shrink-0">
          <span className="absolute left-0 right-0 top-[7px] h-[2px] bg-[#d4d4d4]" />
          <span className="absolute left-[54px] top-0 h-[16px] w-[2px] bg-[#d4d4d4]" />
          <span className="absolute left-[17px] top-[3px] h-[10px] w-[10px] rounded-full border border-[#777] bg-white" />
        </div>
        <span className="ml-[5px] text-[16px] leading-none text-[#888]">+</span>
        <span className="ml-[19px] w-[37px] text-[15.500px]">47%</span>
        <More c="ml-[11px]" />
      </div>
    </div>
  );
}
